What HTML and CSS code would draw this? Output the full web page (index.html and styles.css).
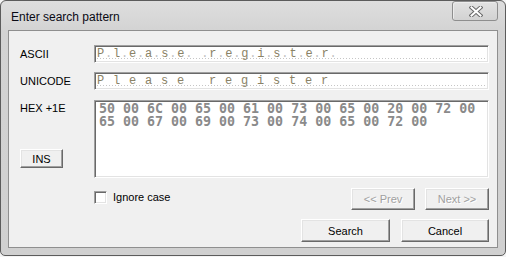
FILE: index.html
```html
<!DOCTYPE html>
<html>
<head>
<meta charset="utf-8">
<link rel="stylesheet" href="styles.css">
</head>
<body>
<div class="window">
  <div class="titlebar">
    <span class="title">Enter search pattern</span>
    <div class="close">
      <svg width="14" height="11" viewBox="0 0 14 11">
        <path d="M2.5 1.5 L11.5 9.5 M11.5 1.5 L2.5 9.5" stroke="#6a6a6a" stroke-width="4" stroke-linecap="square" fill="none"/>
        <path d="M2.5 1.5 L11.5 9.5 M11.5 1.5 L2.5 9.5" stroke="#ffffff" stroke-width="2" stroke-linecap="square" fill="none"/>
      </svg>
    </div>
  </div>
  <div class="client">
    <div class="row">
      <span class="lbl">ASCII</span>
      <div class="field"><span class="bytes">P<i>.</i>l<i>.</i>e<i>.</i>a<i>.</i>s<i>.</i>e<i>.</i> <i>.</i>r<i>.</i>e<i>.</i>g<i>.</i>i<i>.</i>s<i>.</i>t<i>.</i>e<i>.</i>r<i>.</i></span></div>
    </div>
    <div class="row">
      <span class="lbl">UNICODE</span>
      <div class="field"><span class="bytes">P l e a s e   r e g i s t e r </span></div>
    </div>
    <div class="row hexrow">
      <div class="side">
        <span class="lbl">HEX +1E</span>
        <button class="btn ins">INS</button>
      </div>
      <div class="hex">50 00 6C 00 65 00 61 00 73 00 65 00 20 00 72 00
65 00 67 00 69 00 73 00 74 00 65 00 72 00</div>
    </div>
    <div class="optrow">
      <label class="chk"><span class="box"></span>Ignore case</label>
      <div class="nav">
        <button class="btn nav-btn" disabled>&lt;&lt; Prev</button>
        <button class="btn nav-btn" disabled>Next &gt;&gt;</button>
      </div>
    </div>
    <div class="actions">
      <button class="btn act search">Search</button>
      <button class="btn act cancel">Cancel</button>
    </div>
  </div>
</div>
</body>
</html>
```

FILE: styles.css
```css
* { box-sizing: border-box; }

body {
  margin: 0;
  background: #f4f4f4;
  font-family: "Liberation Sans", Arial, sans-serif;
}

.window {
  width: 506px;
  height: 256px;
  border: 1px solid #5c5c5c;
  border-radius: 6px 6px 5px 5px;
  background: linear-gradient(#dedede, #d3d3d3 30px, #d0d0d0);
  padding: 0 7px 7px;
  display: flex;
  flex-direction: column;
}

.titlebar {
  height: 29px;
  display: flex;
  justify-content: space-between;
  align-items: flex-start;
  padding-left: 3px;
}

.title {
  font-size: 12px;
  line-height: 16px;
  padding-top: 8px;
  color: #0a0a14;
}

.close {
  width: 46px;
  height: 20px;
  border: 1px solid #8e8e8e;
  border-radius: 3px;
  background: linear-gradient(#e2e2e2, #d2d2d2);
  box-shadow: inset 1px 1px #ececec;
  display: flex;
  align-items: center;
  justify-content: center;
  padding-left: 1px;
}

.close svg { display: block; }

.client {
  flex: 1;
  border: 1px solid #8f8f8f;
  background: #f0f0f0;
  padding: 14px 8px 0 11px;
  font-size: 11px;
}

.row {
  display: grid;
  grid-template-columns: 74px 1fr;
  align-items: center;
  margin-bottom: 9px;
}

.row + .row { margin-bottom: 10px; }
.hexrow { align-items: stretch; }

.lbl {
  font-size: 11px;
  line-height: 16px;
  color: #000;
}

.field, .hex {
  background: #fff;
  border: 1px solid;
  border-color: #a0a0a0 #ffffff #ffffff #a0a0a0;
  box-shadow: inset 1px 1px #696969, inset -1px -1px #e3e3e3;
}

.field {
  height: 18px;
  padding: 1px 0 0 2px;
  background-image: repeating-linear-gradient(to right, #c6c6c6 0 1px, transparent 1px 3px);
  background-repeat: no-repeat;
  background-size: calc(100% - 4px) 1px;
  background-position: 2px 12px;
  background-color: #fff;
}

.bytes {
  display: block;
  font-family: "Liberation Mono", "Courier New", monospace;
  font-size: 12px;
  letter-spacing: 0.8px;
  line-height: 14px;
  color: #8a8266;
  white-space: pre;
}

.bytes i {
  font-style: normal;
  color: #c2c2c2;
}

.hex {
  height: 78px;
  padding: 1px 0 0 4px;
  font-family: "DejaVu Sans Mono", monospace;
  font-weight: bold;
  font-size: 13.3px;
  line-height: 13px;
  color: #8a8a8a;
  white-space: pre;
}

.side {
  display: flex;
  flex-direction: column;
  align-items: flex-start;
}

.btn {
  font-family: "Liberation Sans", Arial, sans-serif;
  font-size: 11px;
  color: #000;
  background: #f0f0f0;
  border: 1px solid;
  border-color: #ffffff #696969 #696969 #ffffff;
  box-shadow: inset -1px -1px #a0a0a0, inset 1px 1px #e3e3e3;
  padding: 0;
  margin: 0;
}

.ins {
  width: 43px;
  height: 19px;
  margin-top: 33px;
}

.optrow {
  display: flex;
  justify-content: space-between;
  align-items: flex-start;
  padding-left: 74px;
  margin-top: 8px;
}

.chk {
  display: flex;
  align-items: center;
  gap: 6px;
  margin-top: 3px;
  font-size: 11px;
  line-height: 13px;
  color: #000;
}

.box {
  width: 13px;
  height: 13px;
  background: #fff;
  border: 1px solid;
  border-color: #a0a0a0 #ffffff #ffffff #a0a0a0;
  box-shadow: inset 1px 1px #696969, inset -1px -1px #e3e3e3;
}

.nav {
  display: flex;
  gap: 10px;
}

.nav-btn {
  width: 64px;
  height: 22px;
  color: #a0a0a0;
  text-shadow: 1px 1px #ffffff;
}

.actions {
  display: flex;
  justify-content: flex-end;
  gap: 11px;
  margin-top: 9px;
}

.act {
  height: 23px;
}

.search { width: 89px; }
.cancel { width: 88px; }
```
